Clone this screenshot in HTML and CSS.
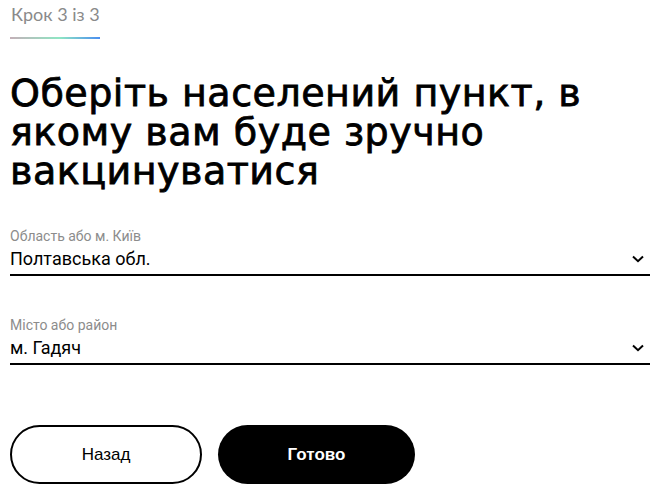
FILE: index.html
```html
<!DOCTYPE html>
<html lang="uk">
<head>
<meta charset="utf-8">
<link rel="stylesheet" href="styles.css">
</head>
<body>
<main class="page">
  <div class="step">
    <span class="step-text">Крок 3 із 3</span>
    <div class="step-line"></div>
  </div>
  <h1 class="title">Оберіть населений пункт, в якому вам буде зручно вакцинуватися</h1>
  <div class="field field-first">
    <label class="field-label">Область або м. Київ</label>
    <div class="field-select">
      <span class="field-value">Полтавська обл.</span>
      <svg class="chev" width="12" height="8" viewBox="0 0 12 8"><path d="M1 1.5 L6 6.2 L11 1.5" fill="none" stroke="#000" stroke-width="2"/></svg>
    </div>
  </div>
  <div class="field">
    <label class="field-label">Місто або район</label>
    <div class="field-select">
      <span class="field-value">м. Гадяч</span>
      <svg class="chev" width="12" height="8" viewBox="0 0 12 8"><path d="M1 1.5 L6 6.2 L11 1.5" fill="none" stroke="#000" stroke-width="2"/></svg>
    </div>
  </div>
  <div class="actions">
    <button class="btn btn-outline">Назад</button>
    <button class="btn btn-solid">Готово</button>
  </div>
</main>
</body>
</html>
```
FILE: styles.css
```css
html, body { margin: 0; padding: 0; background: #fff; }
.page { padding: 0 19px 0 10px; font-family: Roboto, "Liberation Sans", sans-serif; }
.step { padding-top: 4px; }
.step-text { display: block; font-family: Lato, "Open Sans", sans-serif; font-size: 18px; color: #8a8a8a; line-height: 20px; margin-left: 1px; }
.step-line { width: 90px; height: 2px; margin-top: 13px; background: linear-gradient(90deg, #c4b0b8 0%, #8fe6c4 55%, #4a8ef0 100%); }
.title { font-family: "DejaVu Sans", sans-serif; font-weight: 400; font-size: 38px; letter-spacing: 0.5px; line-height: 39px; margin: 35px 0 0 0; color: #000; -webkit-text-stroke: 0.8px #000; }
.field { margin-top: 42px; }
.field-first { margin-top: 38px; }
.field-label { display: block; font-size: 14px; color: #8c8c8c; line-height: 15px; }
.field-select { display: flex; align-items: center; justify-content: space-between; border-bottom: 2px solid #000; padding: 4px 6px 4px 0; }
.field-value { font-size: 18px; line-height: 22px; color: #000; }
.chev { display: block; }
.actions { display: flex; gap: 16px; margin-top: 60px; }
.btn { height: 59px; border-radius: 30px; font-family: "Liberation Sans", Arial, sans-serif; font-size: 17px; cursor: pointer; }
.btn-outline { width: 192px; background: #fff; border: 2px solid #000; color: #000; font-weight: 400; }
.btn-solid { width: 197px; background: #000; border: 0; color: #fff; font-weight: 700; }
```
